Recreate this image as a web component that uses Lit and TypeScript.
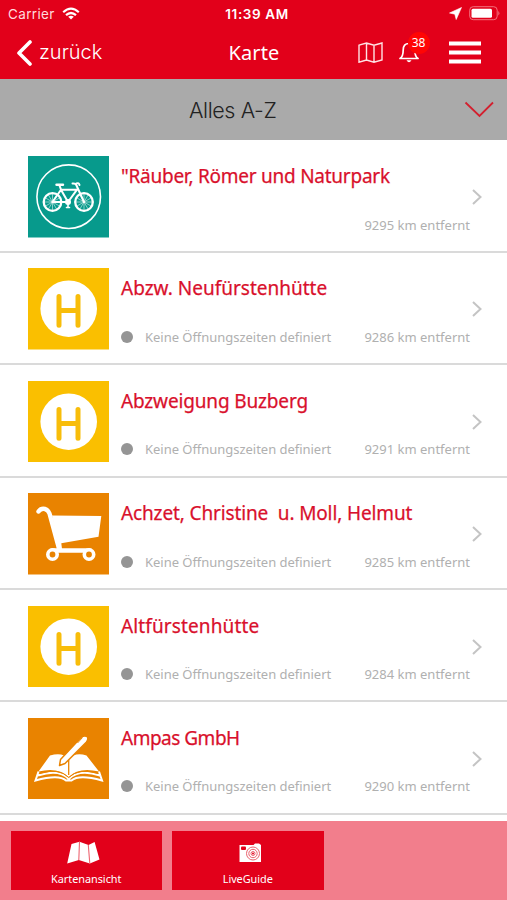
import { LitElement, html, svg, css } from "lit";
import { customElement, property } from "lit/decorators.js";

type Kind = "bike" | "stop" | "cart" | "book";
interface Place {
  kind: Kind;
  name: string;
  km: number;
  hours: boolean;
  tracking: number;
}

const places: Place[] = [
  { kind: "bike", name: "\"Räuber, Römer und Naturpark", km: 9295, hours: false, tracking: -0.25 },
  { kind: "stop", name: "Abzw. Neufürstenhütte", km: 9286, hours: true, tracking: 0 },
  { kind: "stop", name: "Abzweigung Buzberg", km: 9291, hours: true, tracking: -0.15 },
  { kind: "cart", name: "Achzet, Christine  u. Moll, Helmut", km: 9285, hours: true, tracking: -0.13 },
  { kind: "stop", name: "Altfürstenhütte", km: 9284, hours: true, tracking: 0.13 },
  { kind: "book", name: "Ampas GmbH", km: 9290, hours: true, tracking: -0.5 },
];

const spokes = (cx: number, cy: number) =>
  Array.from({ length: 12 }, (_, i) => {
    const a = (i * Math.PI) / 6;
    return svg`<line x1=${cx} y1=${cy} x2=${cx + 9 * Math.cos(a)} y2=${cy + 9 * Math.sin(a)} stroke="#fff" stroke-width=".7" opacity=".75"/>`;
  });

const tiles = {
  bike: svg`
    <rect width="81.5" height="81.5" fill="#079a8c"/>
    <g fill="none" stroke="#fff" stroke-linecap="round" stroke-linejoin="round">
      <circle cx="40.7" cy="40.7" r="31.8" stroke-width="1.6"/>
      ${spokes(24.5, 46)}${spokes(56, 46)}
      <circle cx="24.5" cy="46" r="8.8" stroke-width="2.3"/>
      <circle cx="56" cy="46" r="8.8" stroke-width="2.3"/>
      <path d="M24.5 46 33 33.7H49L40 46H24.5M33 33.7 40 46M31.5 29.5 33 33.7M56 46 48.5 29.5Q48 27.2 44.5 27.5M48.5 27.5Q51 26.3 51.5 29" stroke-width="2"/>
      <path d="M28.5 28.8H35" stroke-width="2.4"/>
      <path d="M40 46V51.5M38.5 51.5H41.5" stroke-width="1.6"/>
    </g>
    <circle cx="40" cy="46" r="3" fill="#fff"/>`,
  stop: svg`
    <rect width="81.5" height="81.5" fill="#fabf00"/>
    <circle cx="40.7" cy="40.7" r="28.3" fill="#fff"/>
    <path d="M31 28.500V57.200M50 28.500V57.200M31 42.500H50" fill="none" stroke="#f8bd0a" stroke-width="5" stroke-linecap="round"/>`,
  cart: svg`
    <rect width="81.5" height="81.5" fill="#e98300"/>
    <path d="M24 22.500 73.300 23 70.500 43.800 33.300 50.200 34 56H31Z" fill="#fff"/>
    <path d="M10.500 18.500Q13 15 17 16Q20 16.800 21.500 20.500L31.500 57.300M24 57.500H62" fill="none" stroke="#fff" stroke-width="4.400" stroke-linecap="round" stroke-linejoin="round"/>
    <circle cx="24.500" cy="61.500" r="4.700" fill="#e98300" stroke="#fff" stroke-width="3.600"/>
    <circle cx="61" cy="61.500" r="4.700" fill="#e98300" stroke="#fff" stroke-width="3.600"/>`,
  book: svg`
    <rect width="81.5" height="81.5" fill="#e98300"/>
    <path d="M22 37.500Q35 34 40.700 41Q47 34 58.500 37.500L71 53.500Q51 48.500 40.700 59Q30 48.500 10.500 53.500Z" fill="#fff"/>
    <path d="M10.500 53.500 7.500 62.500Q31 56 38 62.500H43.500Q51 56 74 62.500L71 53.500M10 57.500Q31 50.500 40.700 61Q51 50.500 72 57.500" fill="none" stroke="#fff" stroke-width="2"/>
    <path d="M12 55.500Q31 49.500 40.700 59.500Q51 49.500 70 55.500" fill="none" stroke="#e98300" stroke-width="1"/>
    <path d="M40.700 42V57" stroke="#e98300" stroke-width="1.300"/>
    <path d="M31.500 47.500 32.500 41.500 53 19.500Q57 16.500 59.500 19Q60.500 21 58.500 24L37 45.500Z" fill="#fff" stroke="#e98300" stroke-width="1.500" stroke-linejoin="round"/>
    <path d="M49.500 25 54.500 19.500" stroke="#e98300" stroke-width="1"/>`,
};

@customElement("place-row")
export class PlaceRow extends LitElement {
  @property({ attribute: false }) place!: Place;
  static styles = css`
    :host { display: flex; box-sizing: border-box; height: 112.4px; padding: 15.5px 24px 0 27.5px; border-bottom: 2px solid #dadada; background: #fff; }
    .tile { width: 81.5px; height: 81.5px; flex: none; display: block; }
    .body { flex: 1; min-width: 0; padding: 7px 1px 0 12px; }
    .name { font: 400 19px/26px "Noto Sans", sans-serif; color: #d9102c; -webkit-text-stroke: .25px #d9102c; white-space: pre; }
    .meta { display: flex; align-items: center; margin-top: 25.5px; height: 20px; font: 13px/20px "Noto Sans", sans-serif; color: #b0b0b0; white-space: nowrap; }
    .dot { width: 12px; height: 12px; border-radius: 50%; background: #959595; margin-right: 12px; }
    .hours { letter-spacing: -0.03px; }
    .km { margin-left: auto; }
    .chevron { width: 12px; height: 18px; margin: 32px 0 0 -1px; padding-left: 1px; flex: none; }
  `;
  render() {
    const p = this.place;
    return html`
      <svg class="tile" viewBox="0 0 81.5 81.5">${tiles[p.kind]}</svg>
      <div class="body">
        <div class="name" style="letter-spacing:${p.tracking}px">${p.name}</div>
        <div class="meta">
          ${p.hours ? html`<span class="dot"></span><span class="hours">Keine Öffnungszeiten definiert</span>` : ""}
          <span class="km">${p.km} km entfernt</span>
        </div>
      </div>
      <svg class="chevron" viewBox="0 0 12 18"><path d="M2 2 9.500 9 2 16" fill="none" stroke="#c4c4c4" stroke-width="2"/></svg>`;
  }
}

@customElement("app-root")
export class AppRoot extends LitElement {
  static styles = css`
    :host { display: flex; flex-direction: column; width: 507px; height: 900px; overflow: hidden; background: #fff; font-family: "Noto Sans", sans-serif; }
    svg { display: block; flex: none; }
    .status { height: 27px; flex: none; display: grid; grid-template-columns: 1fr auto 1fr; align-items: center; padding: 0 7px 0 8px; background: #e2001a; color: #fff; font: 13.5px Inter, sans-serif; }
    .left, .right { display: flex; align-items: center; }
    .carrier { color: #ffdadd; letter-spacing: .35px; margin-right: 7px; }
    .time { font-weight: 600; letter-spacing: .6px; padding-left: 6px; }
    .right { justify-content: flex-end; gap: 7px; }
    .nav { height: 52px; flex: none; display: grid; grid-template-columns: 1fr auto 1fr; align-items: center; padding: 0 26px 0 16px; background: #e2001a; color: #fff; }
    .back { font: 350 20px/24px Inter, sans-serif; margin: -2px 0 0 6px; }
    .title { font-size: 20px; line-height: 26px; letter-spacing: .1px; padding-left: 11px; margin-top: -1px; }
    .actions { display: flex; align-items: center; justify-content: flex-end; margin-top: -2px; }
    .bell { position: relative; margin: 0 30.5px 0 16px; }
    .badge { position: absolute; left: 9px; top: -9px; width: 22px; height: 22px; border-radius: 50%; background: #ff0505; font-size: 12px; line-height: 22px; text-align: center; }
    .filter { height: 61px; flex: none; box-sizing: border-box; display: grid; grid-template-columns: 189px auto 1fr; align-items: center; padding: 0 13px 0 0; background: #aaa; color: #222; }
    .label { font: 350 21.5px Inter, sans-serif; letter-spacing: -.4px; }
    .filter svg { justify-self: end; }
    .list { height: 680.5px; padding-top: .5px; box-sizing: border-box; flex: none; }
    .bar { flex: 1; display: flex; gap: 10px; padding: 10px 10.5px; background: #f27e8c; align-items: flex-start; }
    .tab { box-sizing: border-box; width: 151.5px; height: 59.5px; padding-top: 9px; background: #e2001a; color: #fff; display: flex; flex-direction: column; align-items: center; font-size: 10.9px; line-height: 16px; letter-spacing: -.05px; }
    .tab svg { margin-bottom: 5.5px; }
    .fold { margin-right: 6px; }
  `;
  render() {
    return html`
      <div class="status">
        <div class="left">
          <span class="carrier">Carrier</span>
          <svg width="18" height="13" viewBox="0 0 18 13"><g fill="none" stroke="#fff" stroke-width="2.200"><path d="M1.200 5.200Q9-1.800 16.800 5.200M4 8.200Q9 3.800 14 8.200"/></g><path d="M6.200 9.700Q9 7.600 11.800 9.700L9 12.500Z" fill="#fff"/></svg>
        </div>
        <span class="time">11:39 AM</span>
        <div class="right">
          <svg width="13" height="13" viewBox="0 0 13 13"><path d="M12.500.500.500 6 5.800 7.200 7.200 12.500Z" fill="#fff" stroke="#fff" stroke-width=".6"/></svg>
          <svg width="31" height="15" viewBox="0 0 31 15"><rect x=".7" y=".7" width="27.500" height="13" rx="3.500" fill="none" stroke="#f2707d"/><rect x="2.500" y="2.700" width="20.500" height="9" rx="1.500" fill="#fff"/><path d="M29.300 5Q31.500 7.200 29.300 9.500Z" fill="#f2707d"/></svg>
        </div>
      </div>
      <div class="nav">
        <div class="left">
          <svg width="17" height="27" viewBox="0 0 17 27"><path d="M14 2 3 13 14 24" fill="none" stroke="#fff" stroke-width="3.600" stroke-linecap="round" stroke-linejoin="round"/></svg>
          <span class="back">zurück</span>
        </div>
        <span class="title">Karte</span>
        <div class="actions">
          <svg width="25" height="21" viewBox="0 0 25 21"><path d="M1 3.200 8.500 1 16 3.200 24 1V18L16 20.200 8.500 18 1 20.200ZM8.500 1V18M16 3.200V20.200" fill="none" stroke="#ffe3e5" stroke-width="1.400"/></svg>
          <div class="bell">
            <svg width="20" height="22" viewBox="0 0 20 22"><path d="M1 17.500Q4.200 15.500 4.200 9Q4.200 2.500 10 2.500Q15.800 2.500 15.800 9Q15.800 15.500 19 17.500Z" fill="none" stroke="#fff" stroke-width="1.700" stroke-linejoin="round"/><path d="M7.500 19.300H12.500Q10 23 7.500 19.300Z" fill="#fff"/></svg>
            <span class="badge">38</span>
          </div>
          <svg width="32" height="23" viewBox="0 0 32 23"><path d="M0 2.500H32M0 11.500H32M0 20.500H32" stroke="#fff" stroke-width="4.200"/></svg>
        </div>
      </div>
      <div class="filter">
        <span></span><span class="label">Alles A-Z</span>
        <svg width="30" height="17" viewBox="0 0 30 17"><path d="M1.500 1.500 15.500 15 29 1.500" fill="none" stroke="#d3202f" stroke-width="1.800"/></svg>
      </div>
      <div class="list">${places.map((p) => html`<place-row .place=${p}></place-row>`)}</div>
      <div class="bar">
        <div class="tab">
          <svg class="fold" width="33" height="26" viewBox="0 0 33 26"><path d="M4.500 4 12.500 1.700 21.500 5 27.600 2 32.500 19.500 22.800 23.500 11.800 20 .200 23.500Z" fill="#fff"/><path d="M12.500 1.700 11.800 20M21.300 5 22.800 23.500" stroke="#ee6471" stroke-width="1.100"/></svg>
          Kartenansicht
        </div>
        <div class="tab">
          <svg width="33" height="26" viewBox="-2 0 33 26"><path d="M6.500 5H20.500L22 3.500H26L28 5V22H6.500Z" fill="#fff"/><rect x="8" y="6.500" width="5" height="3.500" rx="1" fill="#e2001a"/><g fill="none" stroke="#e75260" stroke-width=".9"><circle cx="20" cy="13.500" r="6.500"/><circle cx="20" cy="13.500" r="4.200"/><circle cx="20" cy="13.500" r="2"/></g><circle cx="20" cy="13.500" r="1" fill="#e2001a"/></svg>
          LiveGuide
        </div>
      </div>`;
  }
}
